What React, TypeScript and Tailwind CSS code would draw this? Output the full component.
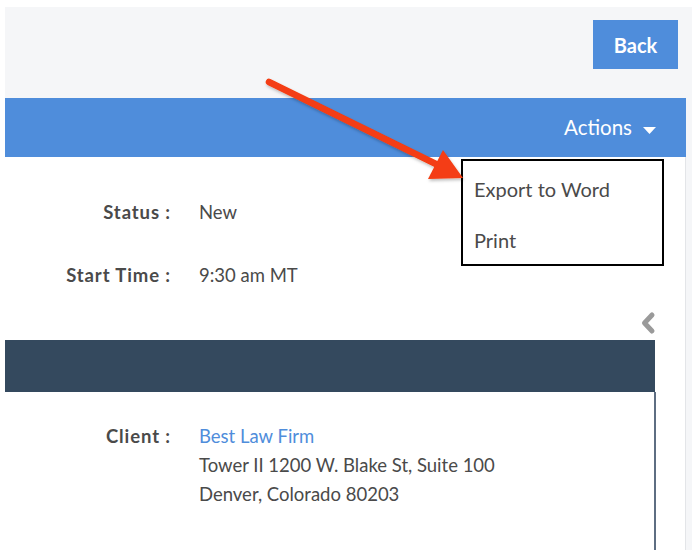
import React from "react";

const font = { fontFamily: "Lato, 'Noto Sans', sans-serif" };

export default function App() {
  return (
    <div
      className="relative w-[698px] h-[559px] bg-white pt-[7px] pl-[5px] overflow-hidden"
      style={font}
    >
      <div className="w-[687px] h-[543px] bg-[#f5f6f8]">
        {/* top header */}
        <div className="h-[91px] flex justify-end items-start pt-[13px] pr-[14px]">
          <button className="w-[85px] h-[49px] bg-[#4f8ddb] text-white font-bold text-[20px] flex items-center justify-center">
            Back
          </button>
        </div>
        {/* blue bar */}
        <div className="w-[681px] h-[59px] bg-[#4f8ddb] flex items-center justify-end pr-[30px]">
          <span className="text-white text-[20.5px]">Actions</span>
          <svg width="13" height="8" viewBox="0 0 13 8" className="ml-[11px] mt-[6px]">
            <path d="M0 0 L13 0 L6.5 7 Z" fill="#ffffff" />
          </svg>
        </div>
        {/* content */}
        <div className="w-[681px] h-[393px] bg-white border-r border-[#e3e5e8] text-[18.5px] text-[#4a4a4a]">
          <div className="pt-[43px]">
            <div className="flex h-[24px] leading-[24px]">
              <div className="w-[166px] text-right font-bold tracking-[0.9px]">Status :</div>
              <div className="ml-[28px]">New</div>
            </div>
            <div className="flex h-[24px] leading-[24px] mt-[39px]">
              <div className="w-[166px] text-right font-bold tracking-[0.9px]">Start Time :</div>
              <div className="ml-[28px]">9:30 am MT</div>
            </div>
          </div>
          <div className="w-[652px] h-[24px] mt-[24px] flex justify-end">
            <svg width="18" height="24" viewBox="0 0 18 24">
              <path d="M13 4 L5.5 12 L13 20" fill="none" stroke="#9a9a9a" strokeWidth="5" strokeLinecap="round" strokeLinejoin="round" />
            </svg>
          </div>
          <div className="w-[650px] h-[52px] mt-[5px] bg-[#34495e]" />
          <div className="w-[651px] h-[158px] border-r-2 border-[#5e6e82] pt-[30px]">
            <div className="flex leading-[29px]">
              <div className="w-[166px] text-right font-bold tracking-[0.9px]">Client :</div>
              <div className="ml-[28px]">
                <div className="text-[#4f8ddb]">Best Law Firm</div>
                <div>Tower II 1200 W. Blake St, Suite 100</div>
                <div>Denver, Colorado 80203</div>
              </div>
            </div>
          </div>
        </div>
      </div>

      {/* dropdown */}
      <div className="absolute left-[461px] top-[159px] w-[203px] h-[107px] bg-white border-2 border-black text-[20px] text-[#4a4a4a] pl-[11px]">
        <div className="h-[24px] leading-[24px] mt-[16px]">Export to Word</div>
        <div className="h-[24px] leading-[24px] mt-[27px]">Print</div>
      </div>

      {/* arrow */}
      <svg
        className="absolute left-0 top-0 pointer-events-none"
        width="698"
        height="559"
        viewBox="0 0 698 559"
      >
        <defs>
          <filter id="sh" x="-10%" y="-10%" width="120%" height="130%">
            <feDropShadow dx="1" dy="2" stdDeviation="1.5" floodColor="#000" floodOpacity="0.25" />
          </filter>
        </defs>
        <g filter="url(#sh)">
          <line x1="269" y1="82" x2="440" y2="166" stroke="#f43d12" strokeWidth="6.5" strokeLinecap="round" />
          <path d="M463 178 L443 150 L428 179 Z" fill="#f43d12" />
        </g>
      </svg>
    </div>
  );
}
